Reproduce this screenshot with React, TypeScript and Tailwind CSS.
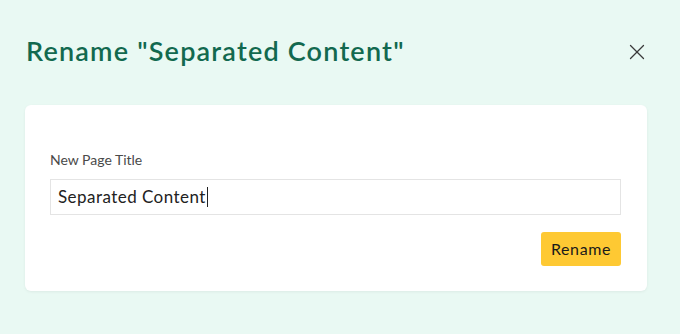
import { X } from 'lucide-react';

export default function App() {
  return (
    <div
      className="flex h-[334px] w-[680px] flex-col bg-[#e9f9f3] pl-[25px] pr-[33px]"
      style={{ fontFamily: 'Lato, "Open Sans", sans-serif' }}
    >
      <header className="flex h-[105px] items-center justify-between pb-[2px]">
        <h1 className="pl-[1px] text-[27px] font-semibold tracking-[1.2px] text-[#12694f]">
          Rename "Separated Content"
        </h1>
        <button className="-mr-[3px] text-[#3a3a3a]" aria-label="Close">
          <X className="h-[26px] w-[26px]" strokeWidth={1.2} />
        </button>
      </header>

      <main className="rounded-md bg-white pb-[25px] pl-[25px] pr-[26px] pt-[44px] shadow-[0_1px_3px_rgba(0,0,0,0.06)]">
        <label className="block text-[14px] text-[#4a4a4a]">New Page Title</label>
        <div className="mt-[9px] flex h-[36px] items-center border border-[#e4e4e4] px-[7px] text-[17px] tracking-[0.45px] text-[#222222]">
          Separated Content
          <span className="ml-[1px] inline-block h-[20px] w-[1px] bg-[#222222]" />
        </div>
        <div className="mt-[17px] flex justify-end">
          <button className="h-[34px] w-[80px] rounded-[3px] bg-[#fec933] text-[16px] tracking-[0.6px] text-[#1a1a1a]">
            Rename
          </button>
        </div>
      </main>
    </div>
  );
}
